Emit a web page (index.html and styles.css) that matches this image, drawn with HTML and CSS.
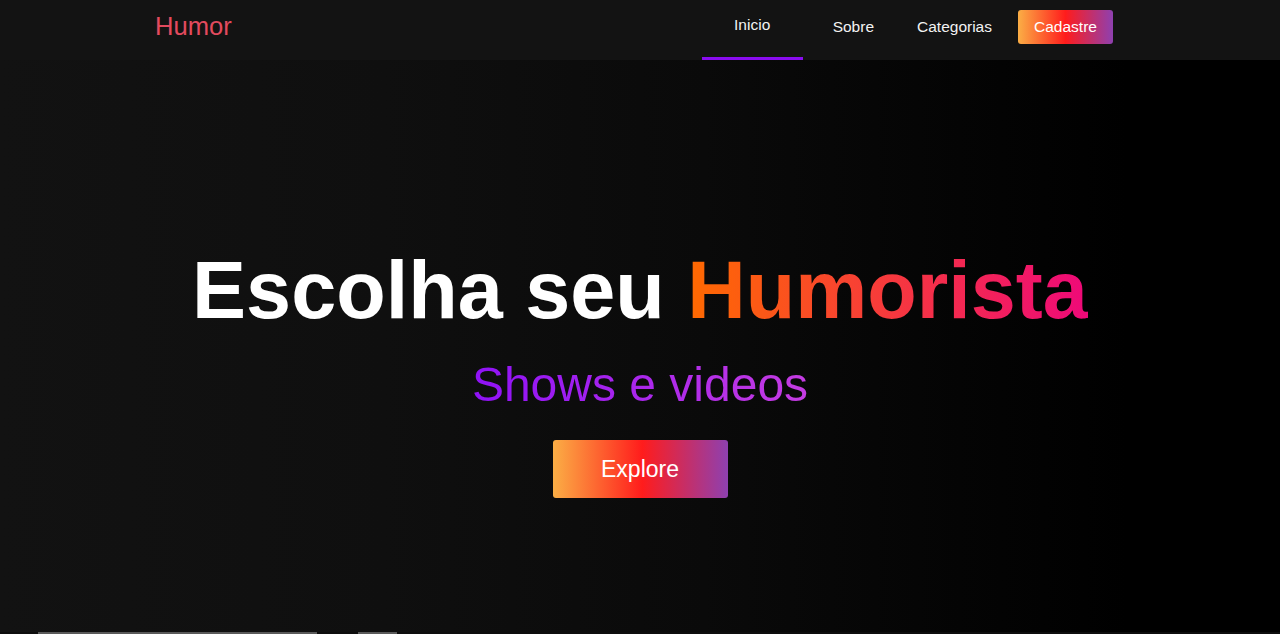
FILE: index.html
```html
<!DOCTYPE html>
<html lang="pt">
<head>
<meta charset="utf-8">
<title>Humor</title>
<link rel="stylesheet" href="styles.css">
</head>
<body>
<header class="header">
  <div class="header-inner">
    <a class="logo" href="#">Humor</a>
    <nav class="nav">
      <a class="nav-link active" href="#">Inicio</a>
      <a class="nav-link sobre" href="#">Sobre</a>
      <a class="nav-link categorias" href="#">Categorias</a>
      <a class="btn-cadastre" href="#">Cadastre</a>
    </nav>
  </div>
</header>
<main>
  <section class="hero">
    <h1 class="hero-title">Escolha seu <span class="grad-text">Humorista</span></h1>
    <p class="hero-sub">Shows e videos</p>
    <a class="btn-explore" href="#">Explore</a>
  </section>
  <section class="next">
    <div class="card card-a"></div>
    <div class="card card-b"></div>
  </section>
</main>
</body>
</html>
```

FILE: styles.css
```css
* { box-sizing: border-box; }
html, body { margin: 0; padding: 0; }
body {
  background: #0b0b0b;
  font-family: "Liberation Sans", Arial, sans-serif;
  color: #fff;
  overflow: hidden;
}
a { text-decoration: none; }

.header {
  background: #131313;
  height: 60px;
}
.header-inner {
  display: flex;
  align-items: flex-start;
  justify-content: space-between;
  height: 60px;
  padding: 0 167px 0 155px;
}
.logo {
  color: #e34a5e;
  font-size: 25.6px;
  line-height: 1;
  margin-top: 14px;
}
.nav {
  display: flex;
  align-items: flex-start;
  height: 60px;
}
.nav-link {
  color: #f2f2f2;
  font-size: 15.5px;
  line-height: 1;
  padding-top: 19px;
  display: block;
}
.nav-link.active {
  width: 101px;
  text-align: center;
  padding-top: 17px;
  height: 60px;
  border-bottom: 3px solid #8a0cf0;
}
.nav-link.sobre { margin-left: 30px; }
.nav-link.categorias { margin-left: 43px; }
.btn-cadastre {
  margin-left: 26px;
  margin-top: 10px;
  display: flex;
  align-items: center;
  justify-content: center;
  width: 95px;
  height: 34px;
  border-radius: 3px;
  color: #fff;
  font-size: 15.5px;
  line-height: 1;
  background: linear-gradient(to right, #fbae45, #ff1c1c 50%, #8e40b0);
}

.hero {
  height: 572px;
  display: flex;
  flex-direction: column;
  align-items: center;
  padding-top: 184px;
  background: linear-gradient(90deg, #121212 0%, #0f0f0f 30%, #0a0a0a 55%, #040404 75%, #000 88%);
}
.hero-title {
  margin: 0;
  font-size: 81px;
  font-weight: 700;
  line-height: normal;
  color: #fff;
}
.grad-text {
  background: linear-gradient(to right, #ff6a00, #ee0979);
  -webkit-background-clip: text;
  background-clip: text;
  color: transparent;
}
.hero-sub {
  margin: 20px 0 0;
  font-size: 48px;
  line-height: normal;
  background: linear-gradient(to right, #8f12f6, #c53ce2);
  -webkit-background-clip: text;
  background-clip: text;
  color: transparent;
}
.btn-explore {
  margin-top: 28px;
  width: 175px;
  height: 58px;
  display: flex;
  align-items: center;
  justify-content: center;
  border-radius: 3px;
  color: #fff;
  font-size: 23px;
  background: linear-gradient(to right, #fbae45, #ff1c1c 51%, #8e40b0);
}

.next {
  display: flex;
  gap: 41px;
  padding-left: 38px;
  height: 2px;
  background: #0d0d0d;
}
.card {
  height: 2px;
  background: #5a5a5a;
}
.card-a { width: 279px; }
.card-b { width: 39px; }
```
